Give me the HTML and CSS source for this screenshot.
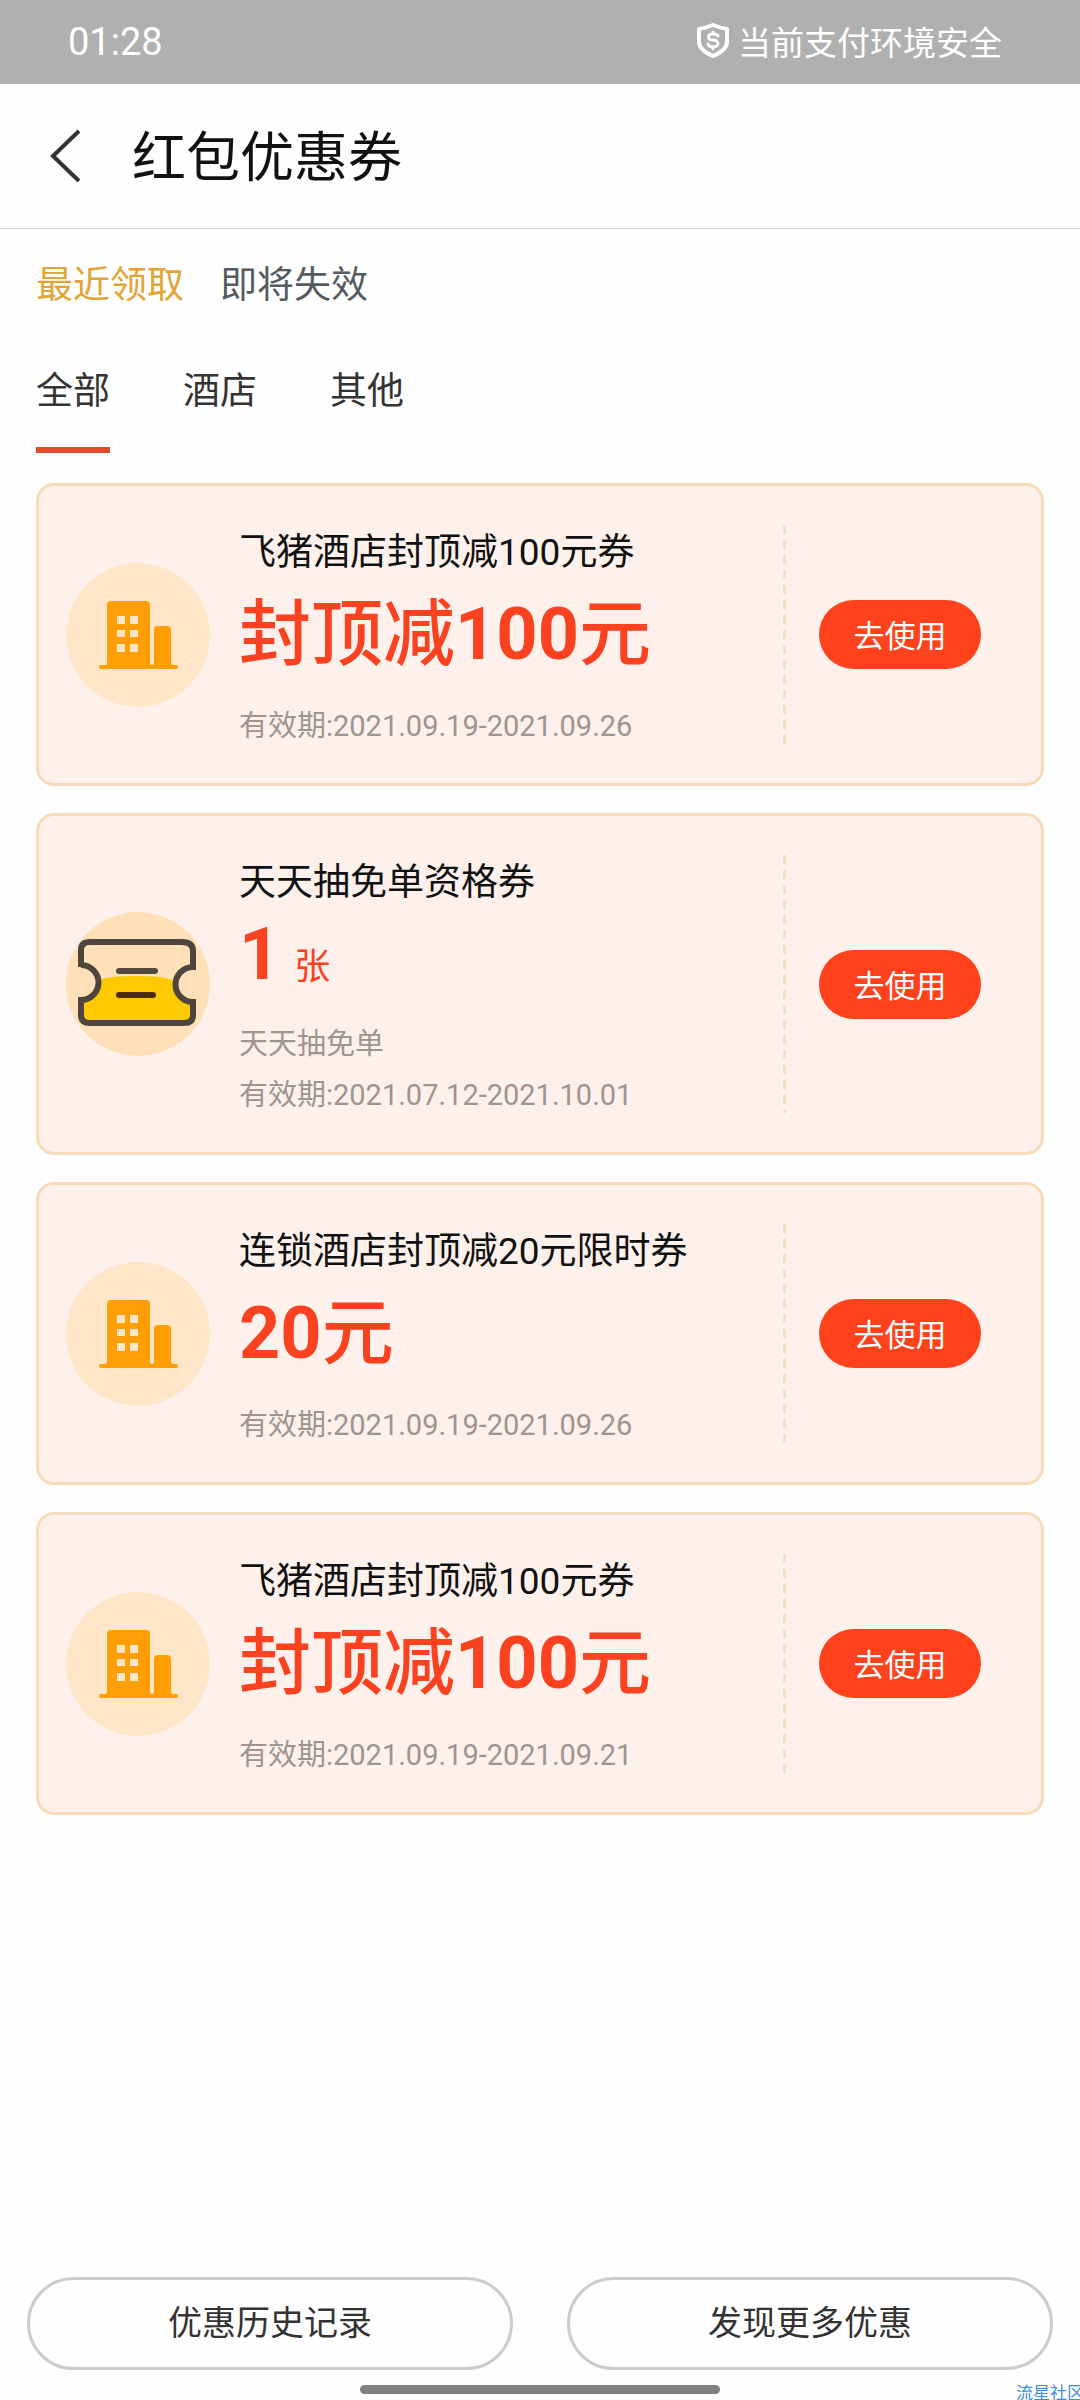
FILE: index.html
```html
<!DOCTYPE html>
<html lang="zh-CN">
<head>
<meta charset="utf-8">
<meta name="viewport" content="width=device-width">
<title>红包优惠券</title>
<link rel="stylesheet" href="styles.css">
</head>
<body>
<svg width="0" height="0" class="sprite" aria-hidden="true">
  <symbol id="hotel" viewBox="0 0 144 144">
    <path fill="#ff9f05" d="M33 104q0-2 2-2h4q2 0 2-3V42q0-4 4-4h35q4 0 4 4v57q0 3 2 3t2-3V67q0-4 4-4h9q4 0 4 4v32q0 3 3 3h2q2 0 2 2t-2 2H35q-2 0-2-2z"/>
    <path fill="#ffe6c8" d="M51 53h8v8h-8zM64 53h8v8h-8zM51 67h8v7h-8zM64 67h8v7h-8zM51 81h8v8h-8zM64 81h8v8h-8z"/>
  </symbol>
  <symbol id="ticket" viewBox="0 0 144 144">
    <path fill="#fdca02" d="M32 69q7-5 38-5t38 5q2 12 19 20v17q0 5-5 5H20q-5 0-5-5V88q15-8 17-19z"/>
    <path fill="none" stroke="#4e453f" stroke-width="6" d="M15 55V38q0-8 9-8h92q11 0 11 9v16a17 17 0 0 0 0 35v13q0 8-9 8H24q-9 0-9-8V88a17 17 0 0 0 0-35"/>
    <path stroke="#54493e" stroke-width="6" stroke-linecap="round" d="M53 59h36"/>
    <path stroke="#4b2e05" stroke-width="6" stroke-linecap="round" d="M53 83h34"/>
  </symbol>
</svg>

<div class="status">
  <time>01:28</time>
  <div class="secure">
    <svg width="34" height="38" viewBox="0 0 34 38" fill="none" stroke="#fff" aria-hidden="true">
      <path stroke-width="4" stroke-linejoin="round" d="M17 3Q24 6 31 7V20Q31 28 17 34Q3 28 3 20V7Q10 6 17 3z"/>
      <path stroke-width="3" stroke-linecap="round" d="M22 14q-1-2-5-2c-6 0-6 6 0 6 7 0 6 7 0 7q-4 0-5-3M17 10v2M17 25v2"/>
    </svg>
    <span>当前支付环境安全</span>
  </div>
</div>

<header class="header">
  <button class="back" aria-label="返回">
    <svg width="34" height="54" viewBox="0 0 34 54" fill="none" stroke="#333" stroke-width="4" aria-hidden="true"><path d="M31 2L5 27l26 25"/></svg>
  </button>
  <h1>红包优惠券</h1>
</header>

<main class="main">
  <nav class="sorts">
    <button class="sort active">最近领取</button>
    <button class="sort">即将失效</button>
  </nav>
  <nav class="tabs">
    <button class="tab active">全部</button>
    <button class="tab">酒店</button>
    <button class="tab">其他</button>
  </nav>

  <section class="coupons">
    <article class="coupon">
      <svg class="badge" aria-hidden="true"><use href="#hotel"/></svg>
      <div class="info">
        <h2>飞猪酒店封顶减100元券</h2>
        <p class="amount">封顶减<b>100</b>元</p>
        <p class="note">有效期:2021.09.19-2021.09.26</p>
      </div>
      <div class="action"><button class="use">去使用</button></div>
    </article>
    <article class="coupon">
      <svg class="badge deep" aria-hidden="true"><use href="#ticket"/></svg>
      <div class="info">
        <h2>天天抽免单资格券</h2>
        <p class="amount counted"><b>1</b><span class="unit">张</span></p>
        <p class="note">天天抽免单</p>
        <p class="note">有效期:2021.07.12-2021.10.01</p>
      </div>
      <div class="action"><button class="use">去使用</button></div>
    </article>
    <article class="coupon">
      <svg class="badge" aria-hidden="true"><use href="#hotel"/></svg>
      <div class="info">
        <h2>连锁酒店封顶减20元限时券</h2>
        <p class="amount"><b>20</b>元</p>
        <p class="note">有效期:2021.09.19-2021.09.26</p>
      </div>
      <div class="action"><button class="use">去使用</button></div>
    </article>
    <article class="coupon">
      <svg class="badge" aria-hidden="true"><use href="#hotel"/></svg>
      <div class="info">
        <h2>飞猪酒店封顶减100元券</h2>
        <p class="amount">封顶减<b>100</b>元</p>
        <p class="note">有效期:2021.09.19-2021.09.21</p>
      </div>
      <div class="action"><button class="use">去使用</button></div>
    </article>
  </section>
</main>

<footer class="footer">
  <div class="links">
    <button class="more">优惠历史记录</button>
    <button class="more">发现更多优惠</button>
  </div>
  <div class="home"></div>
  <span class="watermark">流星社区</span>
</footer>
</body>
</html>
```
FILE: styles.css
```css
* {
  box-sizing: border-box;
  margin: 0;
  padding: 0;
}

html {
  overflow-x: hidden;
}

body {
  display: flex;
  flex-direction: column;
  min-height: 100vh;
  background: #fefefe;
  color: #111;
  font-family: Roboto, "Noto Sans CJK SC", sans-serif;
  font-weight: 400;
}

button {
  border: 0;
  background: none;
  color: inherit;
  font: inherit;
  cursor: pointer;
}

.sprite {
  position: absolute;
}

.status {
  display: flex;
  align-items: center;
  justify-content: space-between;
  height: 84px;
  padding: 0 78px 0 68px;
  background: #b0b0b0;
  color: #fff;
  font-size: 38px;
}

.secure {
  display: flex;
  align-items: center;
  gap: 8px;
  padding-bottom: 2px;
  font-size: 33px;
}

.header {
  display: flex;
  align-items: center;
  gap: 50px;
  height: 145px;
  padding-left: 48px;
  border-bottom: 1px solid #ccc;
}

.back svg {
  display: block;
}

h1 {
  padding-bottom: 6px;
  font-size: 54px;
  font-weight: 400;
}

.main {
  padding: 33px 36px;
}

.sorts,
.tabs {
  display: flex;
  font-size: 37px;
  line-height: 48px;
}

.sorts {
  gap: 36px;
  color: #555b61;
}

.sort.active {
  color: #e3a436;
}

.tabs {
  gap: 73px;
  margin-top: 58px;
  color: #333;
}

.tab {
  padding-bottom: 31px;
  border-bottom: 6px solid transparent;
}

.tab.active {
  border-color: #e04a2b;
}

.coupons {
  display: grid;
  gap: 27px;
  margin-top: 30px;
}

.coupon {
  display: flex;
  align-items: center;
  padding: 39px 60px 31px 27px;
  border: 3px solid #f6dcbc;
  border-radius: 18px;
  background: #fef1eb;
}

.badge {
  flex: none;
  width: 144px;
  height: 144px;
  margin: 0 29px 8px 0;
  border-radius: 50%;
  background: #ffe6c8;
}

.badge.deep {
  background: #ffe0b8;
}

.info {
  flex: 1;
}

h2 {
  font-size: 37px;
  font-weight: 400;
  line-height: 56px;
}

.amount {
  margin-bottom: 12px;
  color: #fb4220;
  font-size: 72px;
  font-weight: 500;
  line-height: 108px;
}

.amount b {
  font-weight: 700;
}

.amount.counted {
  display: flex;
  align-items: baseline;
  gap: 14px;
  margin-bottom: 20px;
  line-height: 88px;
}

.unit {
  font-size: 36px;
  font-weight: 400;
  line-height: 36px;
}

.note {
  color: #9e9490;
  font-size: 29px;
  line-height: 51px;
}

.action {
  display: flex;
  align-items: center;
  align-self: stretch;
  margin-bottom: 8px;
  padding-left: 36px;
  background: repeating-linear-gradient(#f5dfc3 0 9px, transparent 9px 15px) left / 3px 100% no-repeat;
}

.use {
  width: 162px;
  height: 69px;
  padding-bottom: 2px;
  border-radius: 35px;
  background: #ff411c;
  color: #fff;
  font-size: 31px;
}

.footer {
  position: relative;
  margin-top: auto;
  padding: 0 27px 6px;
}

.links {
  display: grid;
  grid-template-columns: 1fr 1fr;
  gap: 54px;
}

.more {
  height: 93px;
  padding-bottom: 6px;
  border: 3px solid #ccc;
  border-radius: 47px;
  color: #333;
  font-size: 34px;
}

.home {
  width: 35%;
  height: 9px;
  margin: 15px auto 0;
  border-radius: 5px;
  background: #808080;
}

.watermark {
  position: absolute;
  right: -4px;
  bottom: -3px;
  color: #3b8fe3;
  font-size: 17px;
  line-height: 20px;
}
```
